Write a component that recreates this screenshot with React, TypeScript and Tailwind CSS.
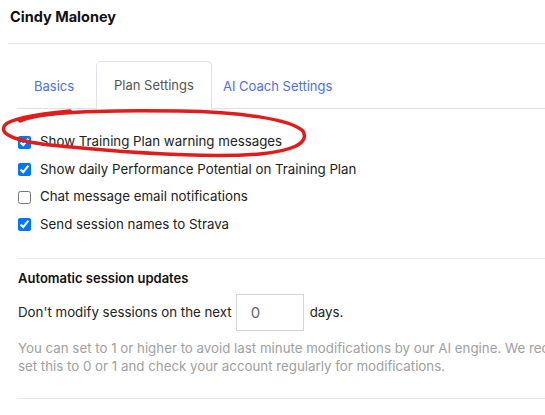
import React, { useState } from 'react';

const options = [
  { id: 'warnings', label: 'Show Training Plan warning messages', checked: true },
  { id: 'perf', label: 'Show daily Performance Potential on Training Plan', checked: true },
  { id: 'chat', label: 'Chat message email notifications', checked: false },
  { id: 'strava', label: 'Send session names to Strava', checked: true },
];

export default function App() {
  const [checks, setChecks] = useState<Record<string, boolean>>(
    Object.fromEntries(options.map(o => [o.id, o.checked]))
  );
  const [days, setDays] = useState('0');

  return (
    <div className="relative w-[545px] h-[415px] overflow-hidden bg-white text-[#212529]" style={{ fontFamily: 'Inter, "Noto Sans", sans-serif' }}>
      <div className="pl-[10px] pt-[7px] h-[43px] text-[14.5px] leading-[20px] font-bold text-[#111]">Cindy Maloney</div>
      <div className="ml-[8px] border-t border-[#e3e3e3]" />

      <div className="pl-[17px] pt-[18px]">
        {/* tabs */}
        <div className="flex border-b border-[#dee2e6] h-[47px] items-end">
          <div className="w-[79px] pl-[17px] h-[47px] pt-[2px] flex items-center text-[13px] text-[#4d6ef5] -mb-px">Basics</div>
          <div className="w-[116px] pl-[17px] h-[48px] pt-[2px] flex items-center text-[13px] text-[#555] bg-white border border-[#dee2e6] border-b-white rounded-t-[5px] -mb-px">Plan Settings</div>
          <div className="pl-[11px] h-[47px] pt-[2px] flex items-center text-[13px] text-[#4d6ef5] -mb-px">AI Coach Settings</div>
        </div>

        <div className="pt-[26.5px] flex flex-col gap-[14.5px]">
          {options.map(o => (
            <label key={o.id} className="flex items-center h-[13px] text-[13.3px] text-[#222] whitespace-nowrap">
              <input
                type="checkbox"
                className="m-0 ml-[1px] w-[13px] h-[13px]"
                checked={checks[o.id]}
                onChange={e => setChecks({ ...checks, [o.id]: e.target.checked })}
              />
              <span className="ml-[9px]">{o.label}</span>
            </label>
          ))}
        </div>

        <div className="mt-[26.5px] border-t border-[#e8e8e8]" />

        <div className="pl-[1px] pt-[10.5px] text-[13px] leading-[18px] font-semibold text-[#111]">Automatic session updates</div>
        <div className="pl-[1px] mt-[7px] flex items-center gap-[4px] text-[13.3px] text-[#222] whitespace-nowrap">
          <span>Don't modify sessions on the next</span>
          <input
            value={days}
            onChange={e => setDays(e.target.value)}
            className="w-[68px] h-[37px] border border-[#d4d4d4] px-[14px] text-[15px] text-[#666] outline-none"
          />
          <span className="ml-[2px]">days.</span>
        </div>
        <div className="pl-[1px] mt-[8px] text-[13.3px] leading-[18px] text-[#a0a0a0] whitespace-nowrap">
          You can set to 1 or higher to avoid last minute modifications by our AI engine. We recommend you
          <br />
          set this to 0 or 1 and check your account regularly for modifications.
        </div>

        <div className="mt-[23px] border-t border-[#e8e8e8]" />
      </div>

      {/* hand-drawn annotation */}
      <svg className="absolute left-0 top-0 pointer-events-none" width="545" height="415">
        <path
          d="M 20 121 C 40 111, 120 110, 180 111 C 240 112, 290 119, 303 131 C 310 144, 290 151, 260 154 C 200 159, 110 151, 50 145 C 15 141, -2 134, 5 125 C 10 119, 40 114, 70 111"
          fill="none"
          stroke="#e21b1b"
          strokeWidth="3.5"
          strokeLinecap="round"
        />
      </svg>
    </div>
  );
}
